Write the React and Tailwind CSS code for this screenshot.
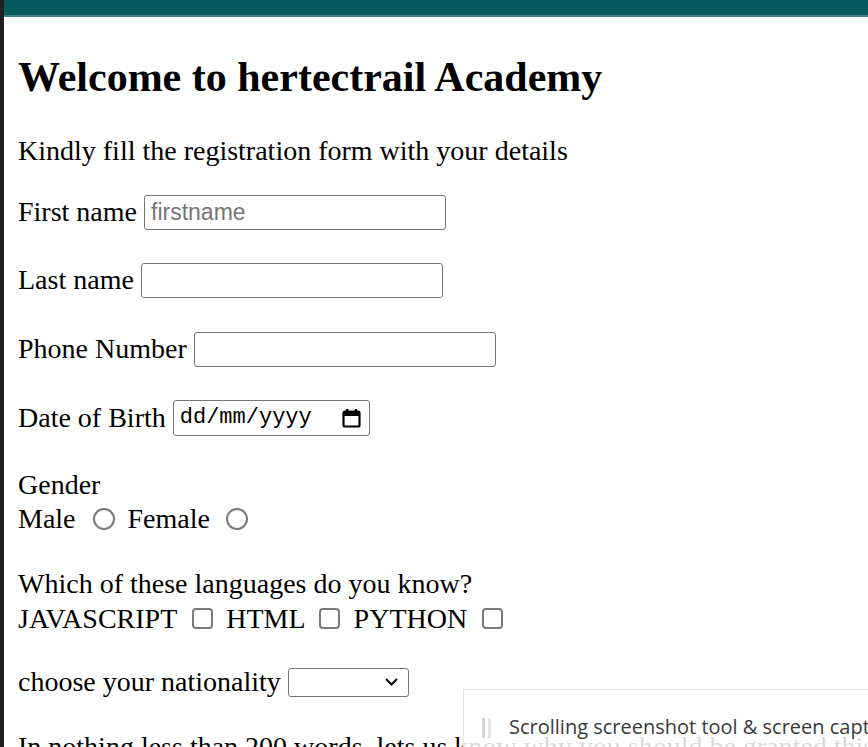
import React from "react";

function TextInput({ placeholder, width = "w-[302px]" }) {
  return (
    <input
      type="text"
      placeholder={placeholder}
      className={`ml-[7px] h-[35px] ${width} rounded-[3px] border border-[#767676] bg-white px-[6px] font-['Liberation_Sans',Arial,sans-serif] text-[23px] text-black placeholder:text-[#757575] outline-none`}
    />
  );
}

function Radio() {
  return <span className="block h-[22px] w-[22px] shrink-0 rounded-full border-2 border-[#7a7a7a] bg-white" />;
}

function Checkbox() {
  return <span className="block h-[21px] w-[21px] shrink-0 rounded-[4px] border-2 border-[#7a7a7a] bg-white" />;
}

function CalendarIcon() {
  return (
    <svg width="19" height="20" viewBox="0 0 19 20" className="shrink-0">
      <rect x="1.5" y="3.5" width="16" height="15" rx="1.5" fill="none" stroke="black" strokeWidth="2.2" />
      <rect x="1" y="3" width="17" height="5" fill="black" />
      <rect x="4" y="1" width="2.4" height="3" fill="black" />
      <rect x="12.6" y="1" width="2.4" height="3" fill="black" />
    </svg>
  );
}

export default function App() {
  return (
    <div className="relative flex h-[747px] w-[868px] overflow-hidden bg-white">
      <div className="w-[4px] shrink-0 bg-[#1f1f1f]" />

      <div className="flex min-w-0 flex-1 flex-col">
        <div className="h-[17px] shrink-0 border-b-2 border-[#3f8081] bg-[#055a5e]" />

        <div className="flex flex-col px-[14px] font-['Liberation_Serif','Times_New_Roman',serif] text-[28px] leading-[32px] text-black">
          <h1 className="mt-[36px] h-[48px] text-[42px] font-bold leading-[48px]">Welcome to hertectrail Academy</h1>

          <p className="mt-[34px]">Kindly fill the registration form with your details</p>

          <div className="mt-[28px] flex h-[35px] items-center">
            <span className="-mt-[1px]">First name</span>
            <TextInput placeholder="firstname" />
          </div>

          <div className="mt-[33px] flex h-[35px] items-center">
            <span className="-mt-[1px]">Last name</span>
            <TextInput />
          </div>

          <div className="mt-[34px] flex h-[35px] items-center">
            <span className="-mt-[1px]">Phone Number</span>
            <TextInput />
          </div>

          <div className="mt-[33px] flex h-[36px] items-center">
            <span>Date of Birth</span>
            <div className="ml-[7px] flex h-[36px] w-[197px] items-center justify-between rounded-[3px] border border-[#767676] bg-white pl-[6px] pr-[8px]">
              <span className="font-['Liberation_Mono',monospace] text-[22px] leading-none">dd/mm/yyyy</span>
              <CalendarIcon />
            </div>
          </div>

          <p className="mt-[33px]">Gender</p>
          <div className="flex h-[35px] items-center">
            <span>Male</span>
            <span className="ml-[17px] flex"><Radio /></span>
            <span className="ml-[13px]">Female</span>
            <span className="ml-[16px] flex"><Radio /></span>
          </div>

          <p className="mt-[32px]">Which of these languages do you know?</p>
          <div className="mt-[1px] flex h-[35px] items-center">
            <span>JAVASCRIPT</span>
            <span className="ml-[15px] flex"><Checkbox /></span>
            <span className="ml-[13px]">HTML</span>
            <span className="ml-[13px] flex"><Checkbox /></span>
            <span className="ml-[14px]">PYTHON</span>
            <span className="ml-[15px] flex"><Checkbox /></span>
          </div>

          <div className="mt-[30px] flex h-[32px] items-center">
            <span>choose your nationality</span>
            <div className="ml-[7px] flex h-[29px] w-[121px] items-center justify-end rounded-[3px] border border-[#767676] bg-white pr-[10px]">
              <svg width="13" height="8" viewBox="0 0 13 8">
                <path d="M1 1l5.5 5.5L12 1" fill="none" stroke="black" strokeWidth="2" />
              </svg>
            </div>
          </div>

          <p className="mt-[33px] whitespace-nowrap">
            In nothing less than 200 words, lets us know why you should be granted this scholarship
          </p>
        </div>
      </div>

      <div className="absolute left-[463px] top-[689px] flex h-[90px] w-[460px] items-start border border-[#e3e3e3] bg-white/85 pl-[18px] pt-[28px]">
        <div className="flex h-[20px] items-stretch gap-[3px]">
          <span className="w-[3px] bg-[#d4d4d4]" />
          <span className="w-[3px] bg-[#e6e6e6]" />
        </div>
        <span className="ml-[18px] -mt-[2px] whitespace-nowrap font-['Open_Sans',sans-serif] text-[20px] leading-[22px] text-[#3a3a3a]">
          Scrolling screenshot tool &amp; screen capture
        </span>
      </div>
    </div>
  );
}
